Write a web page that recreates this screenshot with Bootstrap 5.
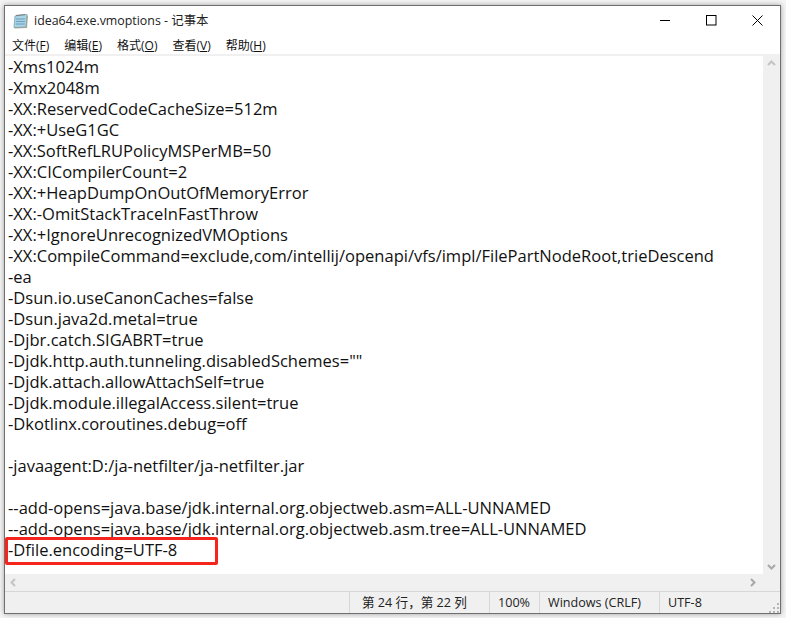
<!DOCTYPE html>
<html lang="zh"><head><meta charset="utf-8"><title>idea64.exe.vmoptions - 记事本</title>
<link href="https://cdn.jsdelivr.net/npm/bootstrap@5.3.0/dist/css/bootstrap.min.css" rel="stylesheet">
<style>
html,body{height:100%}
body{background:#f4f4f4;margin:0;font-family:"Open Sans","Noto Sans CJK SC",sans-serif;color:#000;overflow:hidden;padding:5px 5px 4px 4px}
.win{height:100%;background:#fff;border:1px solid #6f6f6f;box-shadow:0 0 5px rgba(0,0,0,.35)}
.titlebar{height:28px;padding:2px 0 0 8px;font-size:12.4px;line-height:26px;color:#222}
.titlebar svg.app{margin-right:5px;flex:none}
.wbtns{margin-left:auto;margin-top:-2px}
.wbtn{width:46px;height:26px}
.menubar{height:20px;font-size:12px;line-height:16px;padding:4px 0 0 7px;gap:15px;color:#111}
.menubar u{text-underline-offset:1px}
.editmain{min-height:0;border-top:2px solid #f0f0f0}
.edit{padding-left:3px;min-width:0}
.edit pre{margin:0;font:16.53px/21px "Open Sans","Noto Sans CJK SC",sans-serif;color:#111;overflow:visible}
.vbar{width:17px;background:#f0f0f0}
.hbar{height:17px;background:#f0f0f0;padding:0 0 0 5px}
.statusbar{height:22px;border-top:1px solid #d7d7d7;background:#f0f0f0;font-size:12.6px;line-height:21px;color:#222}
.sc{border-left:1px solid #d7d7d7;padding-left:8px;white-space:nowrap;height:100%}
.sc1{margin-left:auto;width:140px;padding-left:12px}
.sc2{width:50px}.sc3{width:120px}.sc4{width:104px}
.redbox{position:absolute;left:0;top:531px;width:213px;height:28px;border:3px solid #f5241c;border-radius:2px}
.sgrip{width:17px}
</style></head><body>
<div class="win d-flex flex-column position-relative">
  <div class="titlebar d-flex align-items-center">
    <svg class="app" width="16" height="16" viewBox="0 0 16 16"><path d="M2.5 3.5L15 2.5 14 15 1.5 15.5Z" fill="#b9a77f"/><path d="M2 3 L14 1.5 L13 14 L1 14.5Z" fill="#a9d3e6" stroke="#7f9fb0" stroke-width=".8"/><path d="M3 6h9M3 8.5h9M2.8 11h9" stroke="#5d93b3" stroke-width=".8"/><path d="M3 2.8l1-.8 1 .6 1-.8 1 .6 1-.8 1 .6 1-.8 1 .6 1-.8" stroke="#666" stroke-width=".8" fill="none"/></svg>
    <span>idea64.exe.vmoptions - 记事本</span>
    <div class="wbtns d-flex">
      <div class="wbtn d-flex align-items-center justify-content-center"><svg width="11" height="11" viewBox="0 0 11 11"><path d="M0 5.5h10" stroke="#000" fill="none"/></svg></div>
      <div class="wbtn d-flex align-items-center justify-content-center"><svg width="11" height="11" viewBox="0 0 11 11"><rect x=".5" y=".5" width="9.5" height="9.5" stroke="#000" fill="none"/></svg></div>
      <div class="wbtn d-flex align-items-center justify-content-center"><svg width="11" height="11" viewBox="0 0 11 11"><path d="M.5.5l10 10M10.5.5l-10 10" stroke="#000" fill="none"/></svg></div>
    </div>
  </div>
  <div class="menubar d-flex">
    <span>文件(<u>F</u>)</span><span>编辑(<u>E</u>)</span><span>格式(<u>O</u>)</span><span>查看(<u>V</u>)</span><span>帮助(<u>H</u>)</span>
  </div>
  <div class="editmain d-flex flex-grow-1">
    <div class="edit flex-grow-1"><pre>-Xms1024m
-Xmx2048m
-XX:ReservedCodeCacheSize=512m
-XX:+UseG1GC
-XX:SoftRefLRUPolicyMSPerMB=50
-XX:CICompilerCount=2
-XX:+HeapDumpOnOutOfMemoryError
-XX:-OmitStackTraceInFastThrow
-XX:+IgnoreUnrecognizedVMOptions
-XX:CompileCommand=exclude,com/intellij/openapi/vfs/impl/FilePartNodeRoot,trieDescend
-ea
-Dsun.io.useCanonCaches=false
-Dsun.java2d.metal=true
-Djbr.catch.SIGABRT=true
-Djdk.http.auth.tunneling.disabledSchemes=""
-Djdk.attach.allowAttachSelf=true
-Djdk.module.illegalAccess.silent=true
-Dkotlinx.coroutines.debug=off

-javaagent:D:/ja-netfilter/ja-netfilter.jar

--add-opens=java.base/jdk.internal.org.objectweb.asm=ALL-UNNAMED
--add-opens=java.base/jdk.internal.org.objectweb.asm.tree=ALL-UNNAMED
-Dfile.encoding=UTF-8</pre></div>
    <div class="vbar d-flex flex-column justify-content-between align-items-center py-1">
      <svg width="9" height="6" viewBox="0 0 9 6"><path d="M1 5l3.5-3.5L8 5" stroke="#c4c4c4" stroke-width="2" fill="none"/></svg>
      <svg width="9" height="6" viewBox="0 0 9 6"><path d="M1 1l3.5 3.5L8 1" stroke="#a8a8a8" stroke-width="2" fill="none"/></svg>
    </div>
  </div>
  <div class="hbar d-flex align-items-center justify-content-between">
    <svg width="6" height="9" viewBox="0 0 6 9"><path d="M5 1L1.5 4.5 5 8" stroke="#c4c4c4" stroke-width="2" fill="none"/></svg>
    <svg class="me-4" width="6" height="9" viewBox="0 0 6 9"><path d="M1 1l3.5 3.5L1 8" stroke="#a8a8a8" stroke-width="2" fill="none"/></svg>
  </div>
  <div class="statusbar d-flex">
    <div class="sc sc1">第 24 行，第 22 列</div>
    <div class="sc sc2">100%</div>
    <div class="sc sc3">Windows (CRLF)</div>
    <div class="sc sc4">UTF-8</div>
    <div class="sgrip d-flex align-items-end justify-content-end"><svg width="11" height="11" viewBox="0 0 11 11" fill="#b5b5b5"><rect x="8" y="1" width="2" height="2"/><rect x="4" y="5" width="2" height="2"/><rect x="8" y="5" width="2" height="2"/><rect x="0" y="9" width="2" height="2"/><rect x="4" y="9" width="2" height="2"/><rect x="8" y="9" width="2" height="2"/></svg></div>
  </div>
  <div class="redbox"></div>
</div>
<script src="https://cdn.jsdelivr.net/npm/bootstrap@5.3.0/dist/js/bootstrap.bundle.min.js"></script>
</body></html>
